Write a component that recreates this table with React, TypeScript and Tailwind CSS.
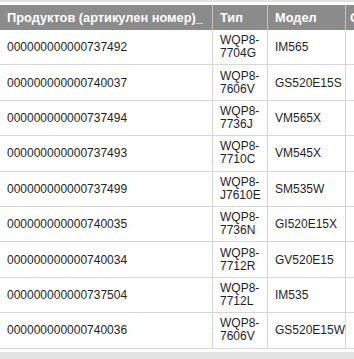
import React from 'react';

type Row = { id: string; type: [string, string]; model: string };

const rows: Row[] = [
  { id: '000000000000737492', type: ['WQP8-', '7704G'], model: 'IM565' },
  { id: '000000000000740037', type: ['WQP8-', '7606V'], model: 'GS520E15S' },
  { id: '000000000000737494', type: ['WQP8-', '7736J'], model: 'VM565X' },
  { id: '000000000000737493', type: ['WQP8-', '7710C'], model: 'VM545X' },
  { id: '000000000000737499', type: ['WQP8-', 'J7610E'], model: 'SM535W' },
  { id: '000000000000740035', type: ['WQP8-', '7736N'], model: 'GI520E15X' },
  { id: '000000000000740034', type: ['WQP8-', '7712R'], model: 'GV520E15' },
  { id: '000000000000737504', type: ['WQP8-', '7712L'], model: 'IM535' },
  { id: '000000000000740036', type: ['WQP8-', '7606V'], model: 'GS520E15W' },
];

const App: React.FC = () => {
  return (
    <div className="w-[354px] h-[359px] overflow-hidden bg-white font-['Liberation_Sans',Arial,sans-serif] text-[12px]">
      <div className="h-[2px] bg-[#e3e3e3]" />
      <div className="h-[3px]" />

      {/* header */}
      <div className="flex h-[25px] bg-[#8b8b8b] text-white text-[12.8px] font-bold whitespace-nowrap">
        <div className="w-[213px] shrink-0 flex items-center pl-[7px] border-r border-[#c4c4c4]">
          Продуктов (артикулен номер)_
        </div>
        <div className="w-[55px] shrink-0 flex items-center pl-[7px] border-r border-[#c4c4c4]">
          Тип
        </div>
        <div className="w-[78px] shrink-0 flex items-center pl-[7px] border-r border-[#c4c4c4]">
          Модел
        </div>
        <div className="flex-1 flex items-center pl-[4px] overflow-hidden">Описание</div>
      </div>

      {/* body */}
      <div className="flex flex-col text-[#1e1e1e]">
        {rows.map((r, i) => (
          <div key={i} className="flex h-[35.4px] border-b border-[#d6d6d6]">
            <div className="w-[213px] shrink-0 flex items-center pl-[7px] border-r border-[#d6d6d6]">
              {r.id}
            </div>
            <div className="w-[55px] shrink-0 flex flex-col justify-center pl-[7px] leading-[13px] border-r border-[#d6d6d6]">
              <span>{r.type[0]}</span>
              <span>{r.type[1]}</span>
            </div>
            <div className="w-[78px] shrink-0 flex items-center pl-[7px] border-r border-[#d6d6d6]">
              {r.model}
            </div>
            <div className="flex-1" />
          </div>
        ))}
      </div>

      <div className="h-[3px]" />
      <div className="h-[10px] bg-[#e3e3e3]" />
    </div>
  );
};

export default App;
